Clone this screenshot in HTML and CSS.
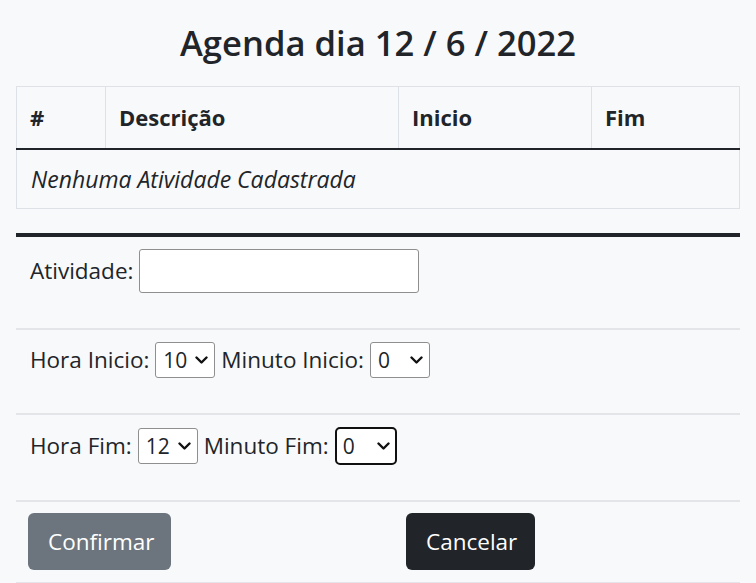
FILE: index.html
```html
<!DOCTYPE html>
<html lang="pt-BR">
<head>
<meta charset="utf-8">
<title>Agenda</title>
<link rel="stylesheet" href="styles.css">
</head>
<body>
<div class="page">
  <h2 class="title">Agenda dia 12 / 6 / 2022</h2>
  <table class="agenda">
    <thead>
      <tr>
        <th class="c-id">#</th>
        <th class="c-desc">Descrição</th>
        <th class="c-ini">Inicio</th>
        <th class="c-fim">Fim</th>
      </tr>
    </thead>
    <tbody>
      <tr><td colspan="4" class="empty">Nenhuma Atividade Cadastrada</td></tr>
    </tbody>
  </table>
  <form class="form">
    <div class="row">
      <label>Atividade:</label>
      <input type="text" class="text-input">
    </div>
    <div class="row">
      <label>Hora Inicio:</label>
      <select class="sel"><option>10</option></select>
      <label>Minuto Inicio:</label>
      <select class="sel"><option>0</option></select>
    </div>
    <div class="row">
      <label>Hora Fim:</label>
      <select class="sel"><option>12</option></select>
      <label>Minuto Fim:</label>
      <select class="sel focused"><option>0</option></select>
    </div>
    <div class="row actions">
      <div class="col"><button type="button" class="btn btn-gray">Confirmar</button></div>
      <div class="col"><button type="button" class="btn btn-dark">Cancelar</button></div>
    </div>
  </form>
</div>
</body>
</html>
```

FILE: styles.css
```css
html, body {
  margin: 0;
  padding: 0;
  background: #f8f9fa;
}
body {
  font-family: "Open Sans", "Noto Sans", sans-serif;
  color: #212529;
  font-size: 22.5px;
}
.page {
  padding: 0 16px;
}
.title {
  margin: 0;
  padding-top: 21px;
  height: 86px;
  box-sizing: border-box;
  text-align: center;
  font-size: 34.6px;
  font-weight: 600;
  line-height: 44px;
}
.agenda {
  width: 100%;
  border-collapse: collapse;
  border: 1px solid #dee2e6;
}
.agenda th {
  text-align: left;
  font-weight: 700;
  font-size: 22px;
  height: 62px;
  padding: 0 13px;
  border-left: 1px solid #dee2e6;
  border-right: 1px solid #dee2e6;
  border-bottom: 2px solid #212529;
  box-sizing: border-box;
}
.c-id { width: 89px; }
.c-desc { width: 293px; }
.c-ini { width: 193px; }
.empty {
  font-style: italic;
  font-size: 23px;
  height: 58px;
  padding: 0 14px;
}
.form {
  margin-top: 24px;
  border-top: 4px solid #212529;
}
.row {
  display: flex;
  align-items: center;
  gap: 6px;
  padding: 12px 14px 35px;
  border-bottom: 2px solid #e3e5e8;
}
.row label { white-space: nowrap; }
.text-input {
  width: 280px;
  height: 44px;
  box-sizing: border-box;
  border: 1px solid #8f8f8f;
  border-radius: 3px;
  background: #fff;
  margin: 0;
}
.sel {
  -webkit-appearance: none;
  appearance: none;
  width: 60px;
  height: 36px;
  box-sizing: border-box;
  padding: 0 0 0 7px;
  font-family: inherit;
  font-size: 21px;
  color: #212529;
  background-color: #fff;
  background-image: url("data:image/svg+xml,%3Csvg xmlns='http://www.w3.org/2000/svg' width='13' height='8' viewBox='0 0 13 8'%3E%3Cpath d='M1.5 1.5l5 5 5-5' fill='none' stroke='%23111' stroke-width='2.4' stroke-linecap='round' stroke-linejoin='round'/%3E%3C/svg%3E");
  background-repeat: no-repeat;
  background-position: right 6px center;
  background-size: 13px 8px;
  border: 1px solid #8f8f8f;
  border-radius: 3px;
  margin: 0;
}
.focused {
  border: 2px solid #101010;
  border-radius: 5px;
  padding-left: 6px;
  background-position: right 5px center;
  height: 38px;
  width: 62px;
}
.actions {
  padding: 11px 0 12px 12px;
  gap: 0;
}
.actions .col {
  flex: 0 0 378px;
}
.btn {
  height: 57px;
  padding: 0 20px;
  border: 0;
  border-radius: 6px;
  color: #fff;
  font-family: inherit;
  font-size: 22.5px;
}
.btn-gray { background: #6c757d; width: 143px; }
.btn-dark { background: #212529; width: 129px; }
```
